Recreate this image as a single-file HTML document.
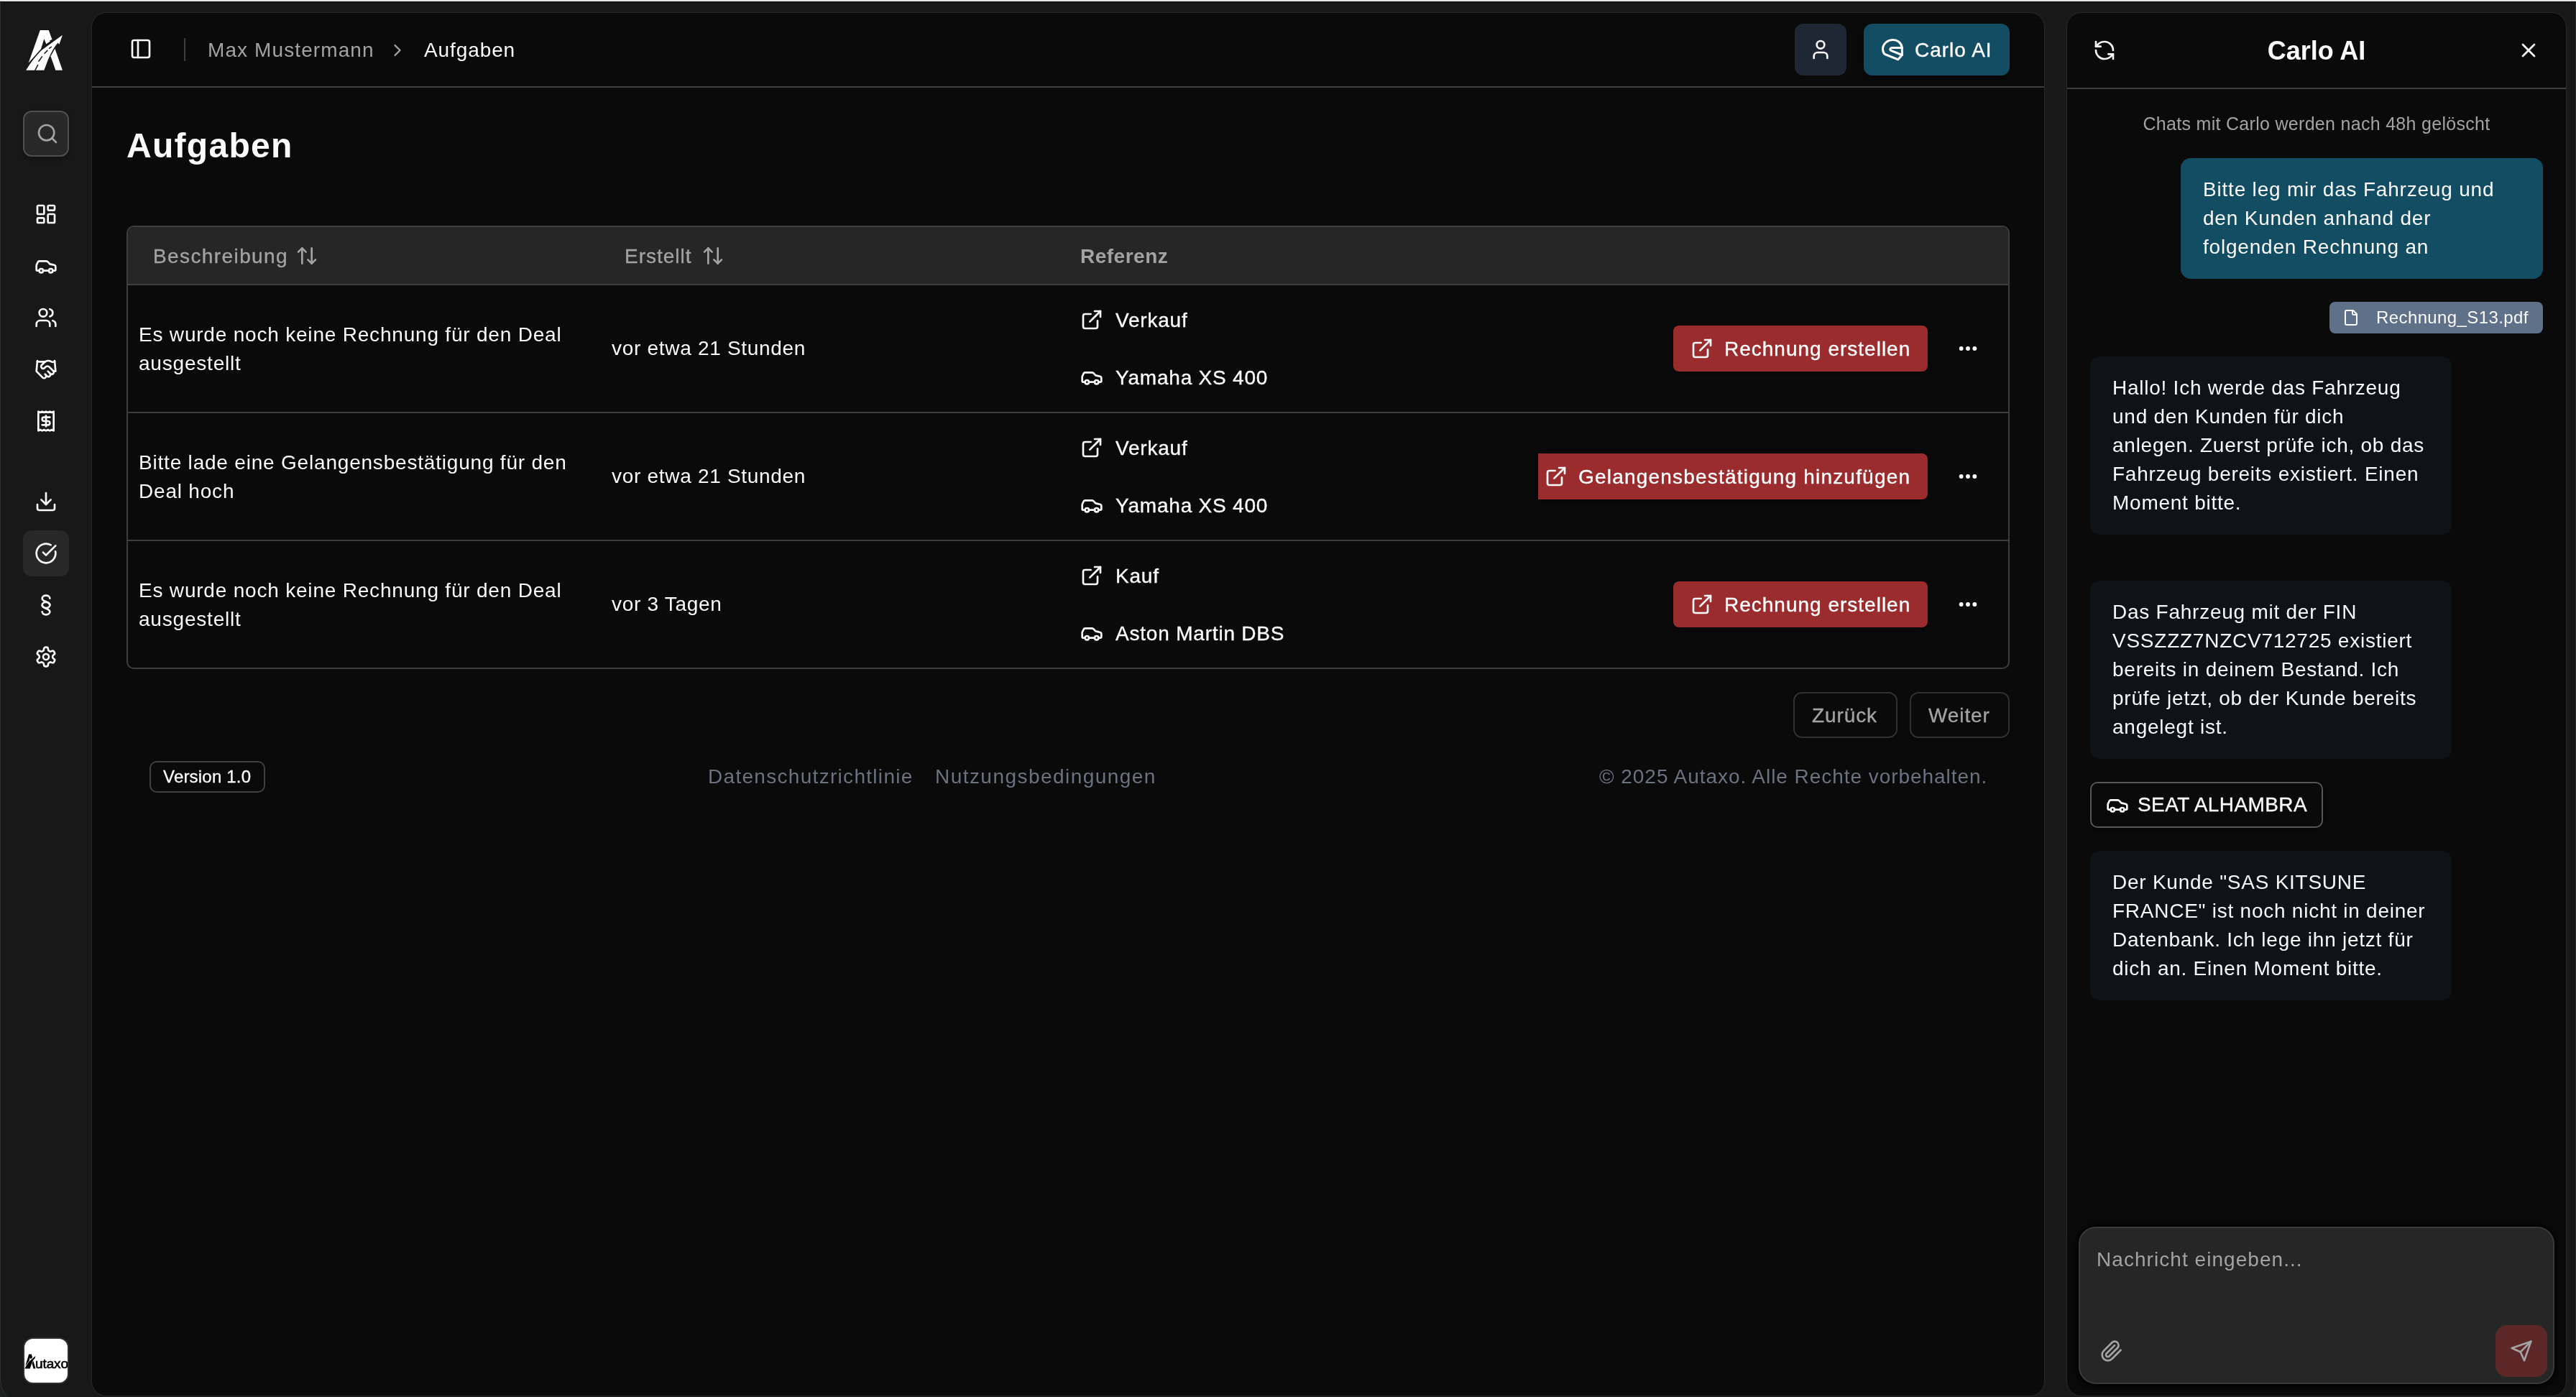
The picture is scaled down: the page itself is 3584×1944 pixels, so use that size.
<!DOCTYPE html>
<html>
<head>
<meta charset="utf-8">
<style>
*{box-sizing:border-box;margin:0;padding:0}
html,body{width:3584px;height:1944px;overflow:hidden;background:#1c2020}
body{background:#181818;font-family:"Liberation Sans",sans-serif;color:#fafafa;position:relative;letter-spacing:0.7px}
.abs{position:absolute}
body{will-change:transform}
.med{-webkit-text-stroke:0.35px currentColor}
.t28{font-size:28px;line-height:40px;white-space:nowrap;letter-spacing:0.8px}
svg.i{fill:none;stroke:currentColor;stroke-width:2;stroke-linecap:round;stroke-linejoin:round;display:block}
#topstrip{left:0;top:0;width:3584px;height:2px;background:#e6e8e5}
#topshade{left:0;top:2px;width:3584px;height:1px;background:#050505}
#leftedge{left:0;top:3px;width:1px;height:1941px;background:#303030}
/* sidebar */
.sb-icon{left:32px;width:64px;height:64px;border-radius:12px;display:flex;align-items:center;justify-content:center;color:#fafafa}
/* panels */
#main{left:128px;top:18px;width:2716px;height:1924px;background:#0a0a0a;border-radius:20px;box-shadow:0 0 0 1px #262626,0 0 12px rgba(255,255,255,0.035);overflow:hidden}
#chat{left:2876px;top:18px;width:694px;height:1924px;background:#0a0a0a;border-radius:20px;box-shadow:0 0 0 1px #262626,0 0 12px rgba(255,255,255,0.035);overflow:hidden}
</style>
</head>
<body>
<div class="abs" style="left:0;top:0;width:3584px;height:1944px;background:#1c2020"></div>
<div class="abs" style="left:0;top:2px;width:3584px;height:1950px;background:#181818;border-radius:0 0 32px 32px;box-shadow:inset 1px 0 0 #303030,inset -1px 0 0 #2a2a2a"></div>
<div id="topstrip" class="abs"></div>
<div id="topshade" class="abs"></div>

<!-- SIDEBAR -->
<div id="sidebar">
  <svg class="abs" style="left:32px;top:38px" width="60" height="64" viewBox="0 0 1310 1397">
    <path fill="#fff" d="M520,85 L780,85 L885,372 L808,402 L828,428 L705,505 L640,350 L548,655 L165,1085 Z"/>
    <path fill="#fff" d="M90,1305 Q300,960 560,700 L935,425 L1200,235 L1100,520 L1060,470 Q900,650 760,990 L640,1305 Z"/>
    <path fill="#fff" d="M970,650 L1200,1305 L990,1305 L840,880 Z"/>
    <g stroke="#181818" stroke-width="34" stroke-linecap="round">
      <line x1="370" y1="1300" x2="450" y2="1150"/>
      <line x1="478" y1="1030" x2="578" y2="893"/>
      <line x1="655" y1="790" x2="740" y2="708"/>
      <line x1="805" y1="638" x2="860" y2="595"/>
    </g>
  </svg>
  <div class="abs" style="left:32px;top:154px;width:64px;height:64px;border-radius:12px;background:#282828;border:2px solid #4e4e4e;box-shadow:0 2px 6px rgba(0,0,0,0.35);display:flex;align-items:center;justify-content:center;color:#a3a3a3">
    <svg class="i" style="position:relative;left:2px" width="32" height="32" viewBox="0 0 24 24"><circle cx="11" cy="11" r="8"/><path d="m21 21-4.3-4.3"/></svg>
  </div>
  <div class="abs sb-icon" style="top:266px"><svg class="i" width="32" height="32" viewBox="0 0 24 24"><rect width="7" height="9" x="3" y="3" rx="1"/><rect width="7" height="5" x="14" y="3" rx="1"/><rect width="7" height="9" x="14" y="12" rx="1"/><rect width="7" height="5" x="3" y="16" rx="1"/></svg></div>
  <div class="abs sb-icon" style="top:338px"><svg class="i" width="32" height="32" viewBox="0 0 24 24"><path d="M19 17h2c.6 0 1-.4 1-1v-3c0-.9-.7-1.7-1.5-1.9C18.7 10.6 16 10 16 10s-1.3-1.4-2.2-2.3c-.5-.4-1.1-.7-1.8-.7H5c-.6 0-1.1.4-1.4.9l-1.4 2.9A3.7 3.7 0 0 0 2 12v4c0 .6.4 1 1 1h2"/><circle cx="7" cy="17" r="2"/><path d="M9 17h6"/><circle cx="17" cy="17" r="2"/></svg></div>
  <div class="abs sb-icon" style="top:410px"><svg class="i" width="32" height="32" viewBox="0 0 24 24"><path d="M16 21v-2a4 4 0 0 0-4-4H6a4 4 0 0 0-4 4v2"/><circle cx="9" cy="7" r="4"/><path d="M22 21v-2a4 4 0 0 0-3-3.87"/><path d="M16 3.13a4 4 0 0 1 0 7.75"/></svg></div>
  <div class="abs sb-icon" style="top:482px"><svg class="i" width="32" height="32" viewBox="0 0 24 24"><path d="m11 17 2 2a1 1 0 1 0 3-3"/><path d="m14 14 2.5 2.5a1 1 0 1 0 3-3l-3.88-3.88a3 3 0 0 0-4.24 0l-.88.88a1 1 0 1 1-3-3l2.81-2.81a5.79 5.79 0 0 1 7.06-.87l.47.28a2 2 0 0 0 1.42.25L21 4"/><path d="m21 3 1 11h-2"/><path d="M3 3 2 14l6.5 6.5a1 1 0 1 0 3-3"/><path d="M3 4h8"/></svg></div>
  <div class="abs sb-icon" style="top:554px"><svg class="i" width="32" height="32" viewBox="0 0 24 24"><path d="M4 2v20l2-1 2 1 2-1 2 1 2-1 2 1 2-1 2 1V2l-2 1-2-1-2 1-2-1-2 1-2-1-2 1Z"/><path d="M16 8h-6a2 2 0 1 0 0 4h4a2 2 0 1 1 0 4H8"/><path d="M12 17.5v-11"/></svg></div>
  <div class="abs sb-icon" style="top:666px"><svg class="i" width="32" height="32" viewBox="0 0 24 24"><path d="M21 15v4a2 2 0 0 1-2 2H5a2 2 0 0 1-2-2v-4"/><polyline points="7 10 12 15 17 10"/><line x1="12" x2="12" y1="15" y2="3"/></svg></div>
  <div class="abs sb-icon" style="top:738px;background:#282828"><svg class="i" width="32" height="32" viewBox="0 0 24 24"><path d="M21.801 10A10 10 0 1 1 17 3.335"/><path d="m9 11 3 3L22 4"/></svg></div>
  <div class="abs sb-icon" style="top:810px"><svg class="i" width="32" height="32" viewBox="0 0 24 24"><path d="M16 5a4 3 0 0 0-8 0c0 4 8 3 8 7a4 3 0 0 1-8 0"/><path d="M8 19a4 3 0 0 0 8 0c0-4-8-3-8-7a4 3 0 0 1 8 0"/></svg></div>
  <div class="abs sb-icon" style="top:882px"><svg class="i" width="32" height="32" viewBox="0 0 24 24"><path d="M12.22 2h-.44a2 2 0 0 0-2 2v.18a2 2 0 0 1-1 1.73l-.43.25a2 2 0 0 1-2 0l-.15-.08a2 2 0 0 0-2.73.73l-.22.38a2 2 0 0 0 .73 2.73l.15.1a2 2 0 0 1 1 1.72v.51a2 2 0 0 1-1 1.74l-.15.09a2 2 0 0 0-.73 2.730l.22.38a2 2 0 0 0 2.73.73l.15-.08a2 2 0 0 1 2 0l.43.25a2 2 0 0 1 1 1.73V20a2 2 0 0 0 2 2h.44a2 2 0 0 0 2-2v-.18a2 2 0 0 1 1-1.73l.43-.25a2 2 0 0 1 2 0l.15.08a2 2 0 0 0 2.73-.73l.22-.39a2 2 0 0 0-.73-2.73l-.15-.08a2 2 0 0 1-1-1.74v-.5a2 2 0 0 1 1-1.74l.15-.09a2 2 0 0 0 .73-2.73l-.22-.38a2 2 0 0 0-2.73-.73l-.15.08a2 2 0 0 1-2 0l-.43-.25a2 2 0 0 1-1-1.73V4a2 2 0 0 0-2-2z"/><circle cx="12" cy="12" r="3"/></svg></div>
  <!-- bottom brand -->
  <div class="abs" style="left:32px;top:1861px;width:64px;height:65px;border-radius:14px;background:#fff;border:2px solid #2e2e2e;overflow:hidden">
    <svg class="abs" style="left:-1px;top:20px" width="18" height="23" viewBox="0 0 1310 1397" preserveAspectRatio="none">
      <path fill="#000" d="M520,85 L780,85 L885,372 L808,402 L828,428 L705,505 L640,350 L548,655 L165,1085 Z"/>
      <path fill="#000" d="M90,1305 Q300,960 560,700 L935,425 L1200,235 L1100,520 L1060,470 Q900,650 760,990 L640,1305 Z"/>
      <path fill="#000" d="M970,650 L1200,1305 L990,1305 L840,880 Z"/>
    </svg>
    <div class="abs" style="left:15px;top:23px;font-size:19px;line-height:24px;color:#000;letter-spacing:-0.1px;-webkit-text-stroke:0.6px #000">utaxo</div>
  </div>
</div>

<!-- MAIN PANEL -->
<div id="main" class="abs">
</div>

<!-- MAIN PANEL CONTENT -->
<div class="abs hline" style="left:128px;top:120px;width:2716px;height:2px;background:#3d3d3d"></div>
<svg class="i abs" style="left:180px;top:52px" width="32" height="32" viewBox="0 0 24 24"><rect width="18" height="18" x="3" y="3" rx="2"/><path d="M9 3v18"/></svg>
<div class="abs" style="left:256px;top:53px;width:2px;height:32px;background:#3d3d3d"></div>
<div class="abs t28" style="left:289px;top:50px;color:#a3a3a3;letter-spacing:1.1px">Max Mustermann</div>
<svg class="i abs" style="left:539px;top:56px;color:#a3a3a3" width="28" height="28" viewBox="0 0 24 24"><path d="m9 18 6-6-6-6"/></svg>
<div class="abs t28" style="left:590px;top:50px;color:#fafafa;letter-spacing:0.9px">Aufgaben</div>

<div class="abs" style="left:2497px;top:33px;width:72px;height:72px;border-radius:12px;background:#1e2733;display:flex;align-items:center;justify-content:center">
  <svg class="i" width="32" height="32" viewBox="0 0 24 24"><path d="M19 21v-2a4 4 0 0 0-4-4H9a4 4 0 0 0-4 4v2"/><circle cx="12" cy="7" r="4"/></svg>
</div>
<div class="abs" style="left:2593px;top:33px;width:203px;height:72px;border-radius:12px;background:#124d63;box-shadow:0 2px 8px rgba(0,0,0,0.5)"></div>
<svg class="abs" style="left:2616px;top:52px" width="34" height="34" viewBox="-2 -2 34 34" fill="none" stroke="#fff" stroke-width="3" stroke-linejoin="round" stroke-linecap="round">
  <path d="M4.5 21.5 L22.8 28.8 L28.4 22.5 L28.3 12 C27 5 21.5 1.2 15.2 1.5 C7 1.8 1.2 8 1.6 15 C1.8 18 3 20.5 4.5 21.5 Z"/>
  <path d="M28.3 12.6 H14 C11.8 12.6 11 15.2 13 16.3 L28.3 22.5"/>
</svg>
<div class="abs t28 med" style="left:2664px;top:50px;color:#fff;letter-spacing:1px">Carlo AI</div>

<div class="abs" style="left:176px;top:171px;font-size:48px;line-height:64px;font-weight:700;letter-spacing:1.3px;color:#fafafa">Aufgaben</div>

<!-- TABLE -->
<div class="abs" style="left:176px;top:314px;width:2620px;height:617px;border:2px solid #3d3d3d;border-radius:10px;overflow:hidden">
  <div class="abs" style="left:0;top:0;width:2616px;height:81px;background:#262626;border-bottom:2px solid #3d3d3d"></div>
  <div class="abs" style="left:0;top:257px;width:2616px;height:2px;background:#3d3d3d"></div>
  <div class="abs" style="left:0;top:435px;width:2616px;height:2px;background:#3d3d3d"></div>
</div>
<div class="abs t28 med" style="left:213px;top:337px;color:#a3a3a3;letter-spacing:1.4px">Beschreibung</div>
<svg class="i abs" style="left:411px;top:340px;color:#a3a3a3" width="32" height="32" viewBox="0 0 24 24"><path d="m21 16-4 4-4-4"/><path d="M17 20V4"/><path d="m3 8 4-4 4 4"/><path d="M7 4v16"/></svg>
<div class="abs t28 med" style="left:869px;top:337px;color:#a3a3a3;letter-spacing:1px">Erstellt</div>
<svg class="i abs" style="left:976px;top:340px;color:#a3a3a3" width="32" height="32" viewBox="0 0 24 24"><path d="m21 16-4 4-4-4"/><path d="M17 20V4"/><path d="m3 8 4-4 4 4"/><path d="M7 4v16"/></svg>
<div class="abs t28" style="left:1503px;top:337px;color:#a3a3a3;font-weight:700;letter-spacing:0.5px">Referenz</div>

<div class="abs t28" style="left:193px;top:446px;color:#fafafa;letter-spacing:0.8px">Es wurde noch keine Rechnung für den Deal<br>ausgestellt</div>
<div class="abs t28" style="left:851px;top:465px;color:#fafafa;letter-spacing:0.7px">vor etwa 21 Stunden</div>
<svg class="i abs" style="left:1503px;top:429px" width="32" height="32" viewBox="0 0 24 24"><path d="M15 3h6v6"/><path d="M10 14 21 3"/><path d="M18 13v6a2 2 0 0 1-2 2H5a2 2 0 0 1-2-2V8a2 2 0 0 1 2-2h6"/></svg>
<div class="abs t28 med" style="left:1552px;top:426px;color:#fafafa">Verkauf</div>
<svg class="i abs" style="left:1503px;top:509px" width="32" height="32" viewBox="0 0 24 24"><path d="M19 17h2c.6 0 1-.4 1-1v-3c0-.9-.7-1.7-1.5-1.9C18.7 10.6 16 10 16 10s-1.3-1.4-2.2-2.3c-.5-.4-1.1-.7-1.8-.7H5c-.6 0-1.1.4-1.4.9l-1.4 2.9A3.7 3.7 0 0 0 2 12v4c0 .6.4 1 1 1h2"/><circle cx="7" cy="17" r="2"/><path d="M9 17h6"/><circle cx="17" cy="17" r="2"/></svg>
<div class="abs t28 med" style="left:1552px;top:506px;color:#fafafa">Yamaha XS 400</div>
<div class="abs" style="left:2328px;top:453px;width:354px;height:64px;border-radius:8px;background:#9b2c2e;box-shadow:0 2px 6px rgba(0,0,0,0.45)"></div>
<svg class="i abs" style="left:2352px;top:469px" width="32" height="32" viewBox="0 0 24 24"><path d="M15 3h6v6"/><path d="M10 14 21 3"/><path d="M18 13v6a2 2 0 0 1-2 2H5a2 2 0 0 1-2-2V8a2 2 0 0 1 2-2h6"/></svg>
<div class="abs t28 med" style="letter-spacing:1.0px;left:2399px;top:466px;color:#fff">Rechnung erstellen</div>
<svg class="abs" style="left:2722px;top:469px" width="32" height="32" viewBox="0 0 24 24" fill="#fff"><circle cx="5" cy="12" r="2.2"/><circle cx="12" cy="12" r="2.2"/><circle cx="19" cy="12" r="2.2"/></svg>

<div class="abs t28" style="left:193px;top:624px;color:#fafafa;letter-spacing:0.8px">Bitte lade eine Gelangensbestätigung für den<br>Deal hoch</div>
<div class="abs t28" style="left:851px;top:643px;color:#fafafa;letter-spacing:0.7px">vor etwa 21 Stunden</div>
<svg class="i abs" style="left:1503px;top:607px" width="32" height="32" viewBox="0 0 24 24"><path d="M15 3h6v6"/><path d="M10 14 21 3"/><path d="M18 13v6a2 2 0 0 1-2 2H5a2 2 0 0 1-2-2V8a2 2 0 0 1 2-2h6"/></svg>
<div class="abs t28 med" style="left:1552px;top:604px;color:#fafafa">Verkauf</div>
<svg class="i abs" style="left:1503px;top:687px" width="32" height="32" viewBox="0 0 24 24"><path d="M19 17h2c.6 0 1-.4 1-1v-3c0-.9-.7-1.7-1.5-1.9C18.7 10.6 16 10 16 10s-1.3-1.4-2.2-2.3c-.5-.4-1.1-.7-1.8-.7H5c-.6 0-1.1.4-1.4.9l-1.4 2.9A3.7 3.7 0 0 0 2 12v4c0 .6.4 1 1 1h2"/><circle cx="7" cy="17" r="2"/><path d="M9 17h6"/><circle cx="17" cy="17" r="2"/></svg>
<div class="abs t28 med" style="left:1552px;top:684px;color:#fafafa">Yamaha XS 400</div>
<div class="abs" style="left:2140px;top:631px;width:542px;height:64px;border-radius:0 8px 8px 0;background:#9b2c2e;box-shadow:0 2px 6px rgba(0,0,0,0.45)"></div>
<svg class="i abs" style="left:2149px;top:647px" width="32" height="32" viewBox="0 0 24 24"><path d="M15 3h6v6"/><path d="M10 14 21 3"/><path d="M18 13v6a2 2 0 0 1-2 2H5a2 2 0 0 1-2-2V8a2 2 0 0 1 2-2h6"/></svg>
<div class="abs t28 med" style="left:2196px;top:644px;color:#fff;letter-spacing:1.2px">Gelangensbestätigung hinzufügen</div>
<svg class="abs" style="left:2722px;top:647px" width="32" height="32" viewBox="0 0 24 24" fill="#fff"><circle cx="5" cy="12" r="2.2"/><circle cx="12" cy="12" r="2.2"/><circle cx="19" cy="12" r="2.2"/></svg>

<div class="abs t28" style="left:193px;top:802px;color:#fafafa;letter-spacing:0.8px">Es wurde noch keine Rechnung für den Deal<br>ausgestellt</div>
<div class="abs t28" style="left:851px;top:821px;color:#fafafa;letter-spacing:0.7px">vor 3 Tagen</div>
<svg class="i abs" style="left:1503px;top:785px" width="32" height="32" viewBox="0 0 24 24"><path d="M15 3h6v6"/><path d="M10 14 21 3"/><path d="M18 13v6a2 2 0 0 1-2 2H5a2 2 0 0 1-2-2V8a2 2 0 0 1 2-2h6"/></svg>
<div class="abs t28 med" style="left:1552px;top:782px;color:#fafafa">Kauf</div>
<svg class="i abs" style="left:1503px;top:865px" width="32" height="32" viewBox="0 0 24 24"><path d="M19 17h2c.6 0 1-.4 1-1v-3c0-.9-.7-1.7-1.5-1.9C18.7 10.6 16 10 16 10s-1.3-1.4-2.2-2.3c-.5-.4-1.1-.7-1.8-.7H5c-.6 0-1.1.4-1.4.9l-1.4 2.9A3.7 3.7 0 0 0 2 12v4c0 .6.4 1 1 1h2"/><circle cx="7" cy="17" r="2"/><path d="M9 17h6"/><circle cx="17" cy="17" r="2"/></svg>
<div class="abs t28 med" style="left:1552px;top:862px;color:#fafafa">Aston Martin DBS</div>
<div class="abs" style="left:2328px;top:809px;width:354px;height:64px;border-radius:8px;background:#9b2c2e;box-shadow:0 2px 6px rgba(0,0,0,0.45)"></div>
<svg class="i abs" style="left:2352px;top:825px" width="32" height="32" viewBox="0 0 24 24"><path d="M15 3h6v6"/><path d="M10 14 21 3"/><path d="M18 13v6a2 2 0 0 1-2 2H5a2 2 0 0 1-2-2V8a2 2 0 0 1 2-2h6"/></svg>
<div class="abs t28 med" style="letter-spacing:1.0px;left:2399px;top:822px;color:#fff">Rechnung erstellen</div>
<svg class="abs" style="left:2722px;top:825px" width="32" height="32" viewBox="0 0 24 24" fill="#fff"><circle cx="5" cy="12" r="2.2"/><circle cx="12" cy="12" r="2.2"/><circle cx="19" cy="12" r="2.2"/></svg>

<!-- PAGINATION -->
<div class="abs" style="left:2495px;top:963px;width:145px;height:64px;border:2px solid #303030;border-radius:12px;box-shadow:0 1px 4px rgba(0,0,0,0.4)"></div>
<div class="abs t28 med" style="left:2521px;top:976px;color:#a3a3a3;letter-spacing:0.9px">Zurück</div>
<div class="abs" style="left:2657px;top:963px;width:139px;height:64px;border:2px solid #303030;border-radius:12px;box-shadow:0 1px 4px rgba(0,0,0,0.4)"></div>
<div class="abs t28 med" style="left:2683px;top:976px;color:#a3a3a3;letter-spacing:0.9px">Weiter</div>

<!-- FOOTER -->
<div class="abs" style="left:208px;top:1059px;width:161px;height:44px;border:2px solid #404040;border-radius:10px"></div>
<div class="abs med" style="left:227px;top:1065px;font-size:24px;line-height:32px;color:#fafafa;letter-spacing:0.2px">Version 1.0</div>
<div class="abs t28" style="left:985px;top:1061px;color:#6b7280;letter-spacing:1.3px">Datenschutzrichtlinie</div>
<div class="abs t28" style="left:1301px;top:1061px;color:#6b7280;letter-spacing:1.45px">Nutzungsbedingungen</div>
<div class="abs t28" style="left:2225px;top:1061px;color:#6b7280;letter-spacing:0.95px">© 2025 Autaxo. Alle Rechte vorbehalten.</div>


<!-- CHAT PANEL -->
<div id="chat" class="abs">
</div>

<!-- CHAT CONTENT -->
<div class="abs" style="left:2876px;top:122px;width:694px;height:2px;background:#3d3d3d"></div>
<svg class="i abs" style="left:2912px;top:54px" width="32" height="32" viewBox="0 0 24 24"><path d="M21 12a9 9 0 0 0-9-9 9.75 9.75 0 0 0-6.74 2.740L3 8"/><path d="M3 3v5h5"/><path d="M3 12a9 9 0 0 0 9 9 9.75 9.75 0 0 0 6.74-2.74L21 16"/><path d="M16 16h5v5"/></svg>
<div class="abs" style="left:2876px;top:43px;width:694px;text-align:center;font-size:36px;line-height:56px;font-weight:700;letter-spacing:0px;color:#fafafa">Carlo AI</div>
<svg class="i abs" style="left:3502px;top:54px" width="32" height="32" viewBox="0 0 24 24"><path d="M18 6 6 18"/><path d="m6 6 12 12"/></svg>
<div class="abs" style="left:2876px;top:156px;width:694px;text-align:center;font-size:25px;line-height:32px;color:#a3a3a3;letter-spacing:0.3px">Chats mit Carlo werden nach 48h gelöscht</div>

<div class="abs" style="left:3034px;top:220px;width:504px;height:168px;border-radius:14px;background:#124d63"></div>
<div class="abs t28" style="left:3065px;top:244px;color:#fafafa;letter-spacing:0.8px">Bitte leg mir das Fahrzeug und<br>den Kunden anhand der<br>folgenden Rechnung an</div>

<div class="abs" style="left:3241px;top:420px;width:297px;height:44px;border-radius:8px;background:#5f7189"></div>
<svg class="i abs" style="left:3259px;top:430px" width="24" height="24" viewBox="0 0 24 24"><path d="M15 2H6a2 2 0 0 0-2 2v16a2 2 0 0 0 2 2h12a2 2 0 0 0 2-2V7Z"/><path d="M14 2v4a2 2 0 0 0 2 2h4"/></svg>
<div class="abs" style="left:3306px;top:426px;font-size:24px;line-height:32px;color:#fafafa;letter-spacing:0.4px;white-space:nowrap">Rechnung_S13.pdf</div>

<div class="abs" style="left:2908px;top:496px;width:503px;height:248px;border-radius:14px;background:#0d1316"></div>
<div class="abs t28" style="left:2939px;top:520px;color:#fafafa;letter-spacing:0.75px">Hallo! Ich werde das Fahrzeug<br>und den Kunden für dich<br>anlegen. Zuerst prüfe ich, ob das<br>Fahrzeug bereits existiert. Einen<br>Moment bitte.</div>

<div class="abs" style="left:2908px;top:808px;width:503px;height:248px;border-radius:14px;background:#0d1316"></div>
<div class="abs t28" style="left:2939px;top:832px;color:#fafafa;letter-spacing:0.75px">Das Fahrzeug mit der FIN<br>VSSZZZ7NZCV712725 existiert<br>bereits in deinem Bestand. Ich<br>prüfe jetzt, ob der Kunde bereits<br>angelegt ist.</div>

<div class="abs" style="left:2908px;top:1088px;width:324px;height:64px;border-radius:10px;border:2px solid #565656;box-shadow:0 1px 6px rgba(0,0,0,0.6)"></div>
<svg class="i abs" style="left:2930px;top:1104px" width="32" height="32" viewBox="0 0 24 24"><path d="M19 17h2c.6 0 1-.4 1-1v-3c0-.9-.7-1.7-1.5-1.9C18.7 10.6 16 10 16 10s-1.3-1.4-2.2-2.3c-.5-.4-1.1-.7-1.8-.7H5c-.6 0-1.1.4-1.4.9l-1.4 2.9A3.7 3.7 0 0 0 2 12v4c0 .6.4 1 1 1h2"/><circle cx="7" cy="17" r="2"/><path d="M9 17h6"/><circle cx="17" cy="17" r="2"/></svg>
<div class="abs t28 med" style="left:2974px;top:1100px;color:#fafafa;letter-spacing:0.4px">SEAT ALHAMBRA</div>

<div class="abs" style="left:2908px;top:1184px;width:503px;height:208px;border-radius:14px;background:#0d1316"></div>
<div class="abs t28" style="left:2939px;top:1208px;color:#fafafa;letter-spacing:0.75px">Der Kunde "SAS KITSUNE<br>FRANCE" ist noch nicht in deiner<br>Datenbank. Ich lege ihn jetzt für<br>dich an. Einen Moment bitte.</div>

<div class="abs" style="left:2892px;top:1707px;width:662px;height:219px;border-radius:24px;background:#262626;border:2px solid #3a3a3a;box-shadow:0 0 4px 2px rgba(0,0,0,0.6),0 4px 14px rgba(0,0,0,0.6)"></div>
<div class="abs t28" style="left:2917px;top:1733px;color:#a3a3a3;letter-spacing:1.05px">Nachricht eingeben...</div>
<svg class="i abs" style="left:2922px;top:1864px;color:#a3a3a3" width="32" height="32" viewBox="0 0 24 24"><path d="m21.44 11.05-9.19 9.19a6 6 0 0 1-8.49-8.49l8.57-8.57A4 4 0 1 1 18 8.84l-8.59 8.57a2 2 0 0 1-2.83-2.83l8.49-8.48"/></svg>
<div class="abs" style="left:3472px;top:1844px;width:72px;height:72px;border-radius:16px;background:#5e2727"></div>
<svg class="i abs" style="left:3492px;top:1864px;color:#a3a3a3" width="32" height="32" viewBox="0 0 24 24"><path d="m22 2-7 20-4-9-9-4Z"/><path d="M22 2 11 13"/></svg>


</body>
</html>
